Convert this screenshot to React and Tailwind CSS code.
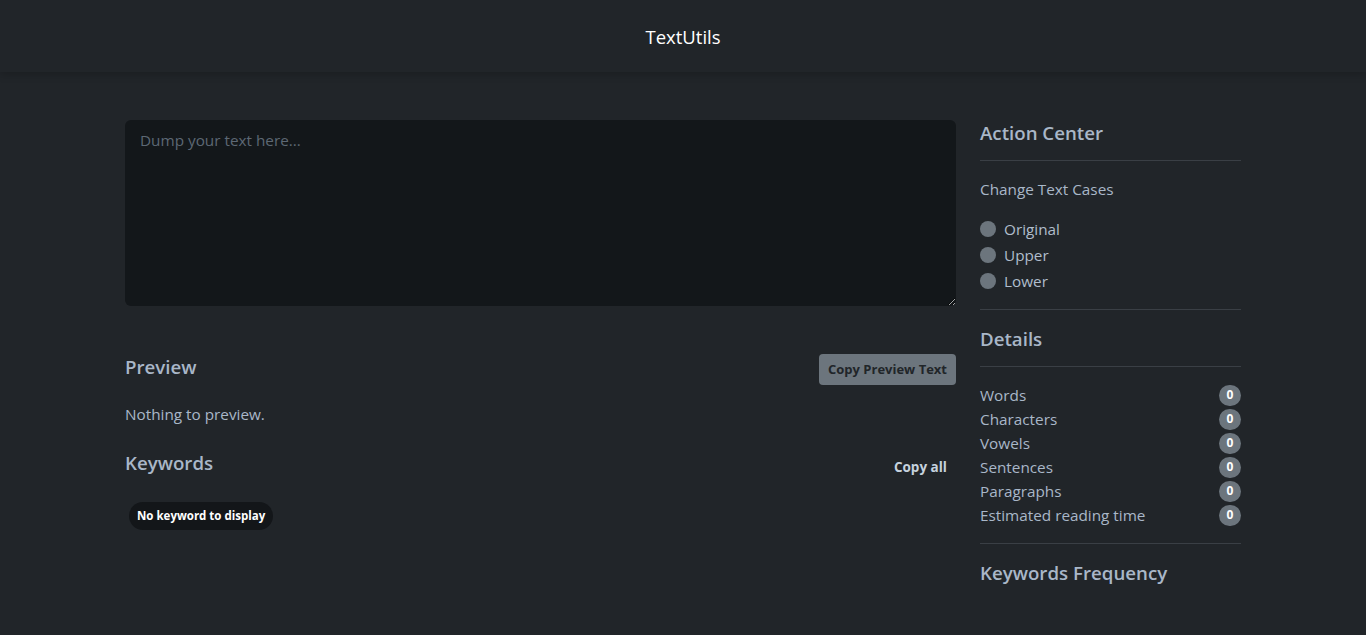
import React from "react";

function Hr() {
  return <div className="h-px w-full bg-[#3a3f45]" />;
}

function Radio({ label }) {
  return (
    <label className="flex h-[26px] items-center gap-2">
      <span className="h-4 w-4 rounded-full bg-[#6c757d]" />
      <span className="text-[15.3px] leading-[24px] text-[#b0bdcc]">{label}</span>
    </label>
  );
}

function Row({ label }) {
  return (
    <div className="flex h-6 items-center justify-between">
      <span className="text-[15.3px] leading-[24px]">{label}</span>
      <span className="flex h-[21px] min-w-[22px] items-center justify-center rounded-full bg-[#6c757d] px-[7px] text-[12px] font-bold text-white">0</span>
    </div>
  );
}

export default function App() {
  return (
    <div className="min-h-screen bg-[#212529] font-['Open_Sans',sans-serif] text-[#a9b7c8]">
      <nav className="relative z-10 flex h-[72px] items-center justify-center bg-[#212529] pt-[2px] shadow-[0_3px_8px_rgba(0,0,0,0.18)]">
        <span className="text-[18.5px] text-white">TextUtils</span>
      </nav>
      <main className="mx-auto flex w-[1116px] gap-6 pt-12">
        <section className="w-[831px] shrink-0">
          <textarea
            className="block h-[186px] w-full rounded-md bg-[#13171a] px-[15px] py-[9px] text-[15.3px] text-[#c8d0d8] outline-none placeholder:text-[#5d6874]"
            placeholder="Dump your text here..."
          />
          <div className="mt-12 flex h-[31px] items-start justify-between">
            <h5 className="mt-px text-[18.7px] font-semibold leading-6">Preview</h5>
            <button className="h-[31px] rounded bg-[#6c757d] px-[9px] text-[13px] font-bold text-[#212529]">
              Copy Preview Text
            </button>
          </div>
          <p className="mt-[17px] text-[15.3px] leading-6">Nothing to preview.</p>
          <div className="mt-[25px] flex h-6 items-center justify-between">
            <h5 className="text-[18.7px] font-semibold leading-6">Keywords</h5>
            <button className="mr-[9px] mt-2 text-[13.5px] font-bold text-[#c6d2de]">Copy all</button>
          </div>
          <div className="mt-[27px] pl-1">
            <span className="inline-flex h-[28px] items-center rounded-full bg-[#131619] px-2 text-[11.5px] font-bold text-white">
              No keyword to display
            </span>
          </div>
        </section>
        <aside className="w-[261px] shrink-0 pt-px">
          <h5 className="h-6 text-[18.7px] font-semibold leading-6">Action Center</h5>
          <div className="mt-[15px]"><Hr /></div>
          <p className="mt-4 text-[15.3px] leading-6">Change Text Cases</p>
          <div className="mt-[15px]">
            <Radio label="Original" />
            <Radio label="Upper" />
            <Radio label="Lower" />
          </div>
          <div className="mt-[15px]"><Hr /></div>
          <h5 className="mt-[17px] h-6 text-[18.7px] font-semibold leading-6">Details</h5>
          <div className="mt-[15px]"><Hr /></div>
          <div className="mt-4">
            <Row label="Words" />
            <Row label="Characters" />
            <Row label="Vowels" />
            <Row label="Sentences" />
            <Row label="Paragraphs" />
            <Row label="Estimated reading time" />
          </div>
          <div className="mt-4"><Hr /></div>
          <h5 className="mt-[17px] h-6 text-[18.7px] font-semibold leading-6">Keywords Frequency</h5>
        </aside>
      </main>
    </div>
  );
}
